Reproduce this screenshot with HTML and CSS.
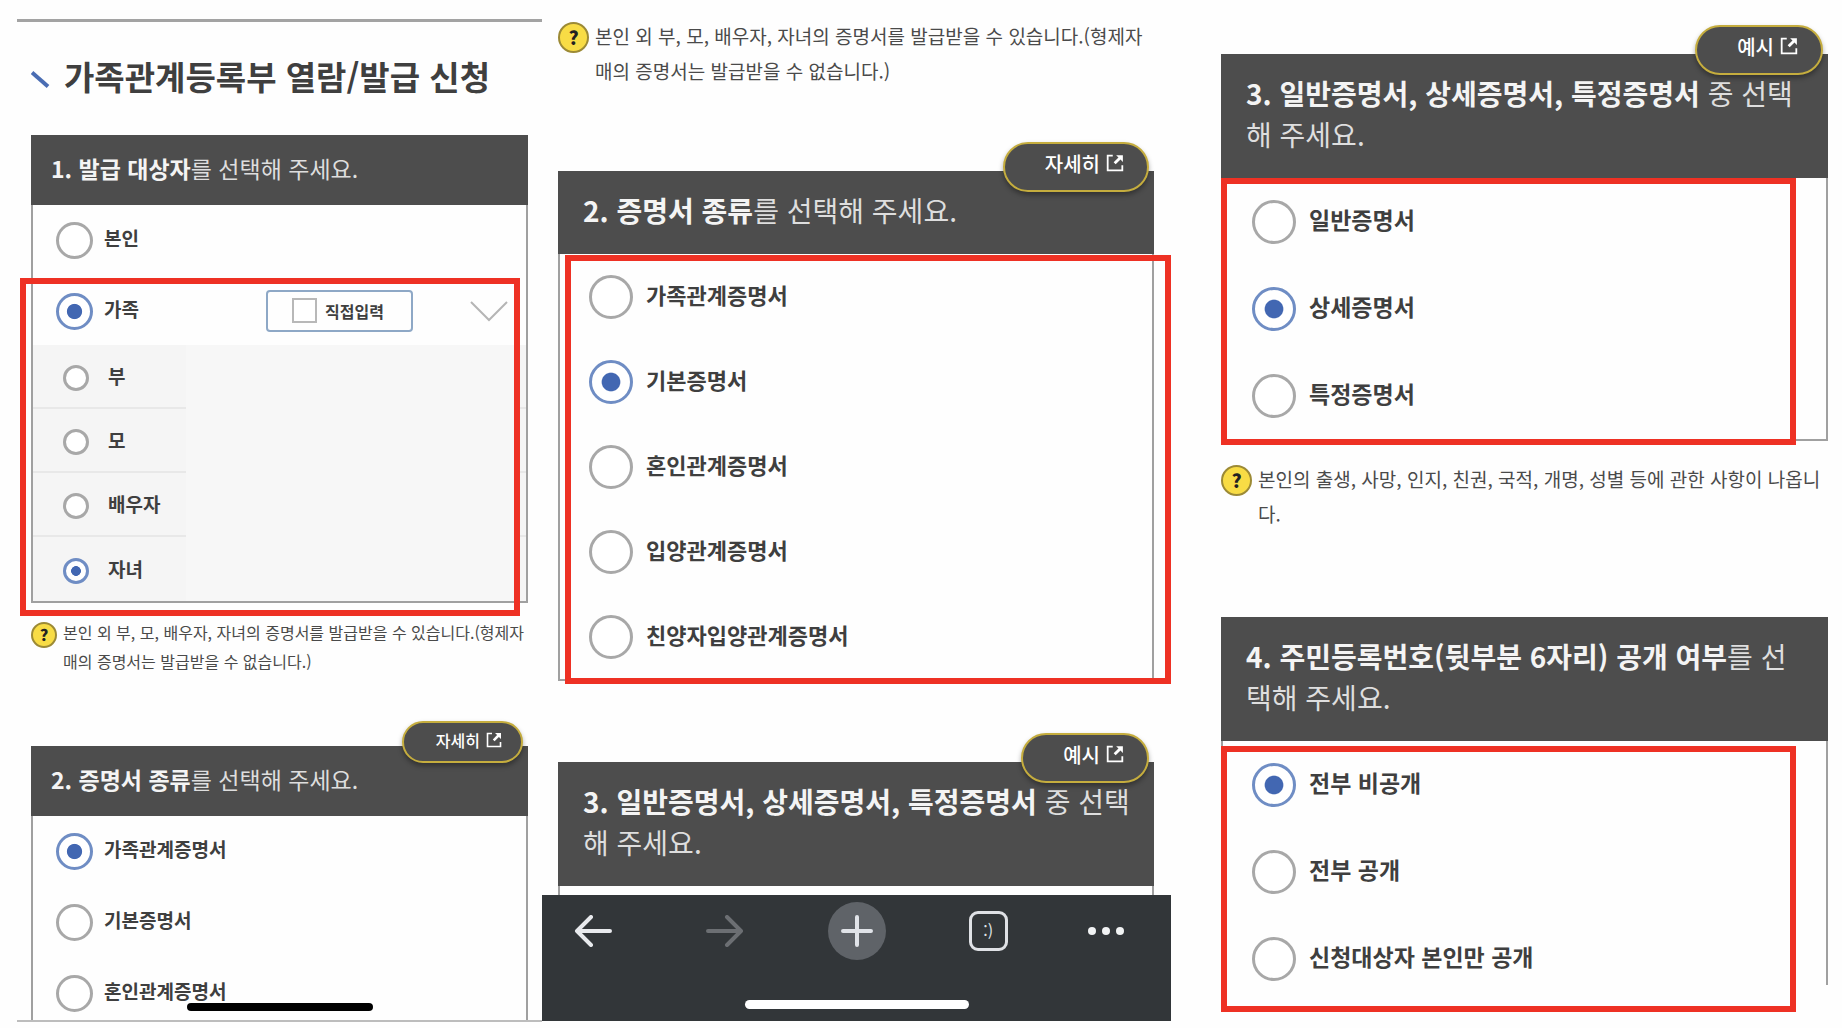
FILE: index.html
```html
<!DOCTYPE html>
<html lang="ko">
<head>
<meta charset="utf-8">
<meta name="viewport" content="width=device-width, initial-scale=1">
<title>가족관계등록부 열람/발급 신청</title>
<link rel="stylesheet" href="styles.css">
</head>
<body>
<svg class="defs" aria-hidden="true">
  <symbol id="external" viewBox="0 0 16 16">
    <path d="M6 1.5H1.5V14.5H14.5V10" fill="none" stroke="currentColor" stroke-width="1.6"/>
    <path d="M9 1H15V7L12.9 4.9L8.6 9.2L6.8 7.4L11.1 3.1Z" fill="currentColor"/>
  </symbol>
</svg>
<main class="board">

  <section class="shot shot-start">
    <h1 class="title">
      <svg class="title-mark" viewBox="0 0 19 17" aria-hidden="true"><path d="M1 1.5L17 15.5" stroke="#4a6db3" stroke-width="4"/></svg>
      가족관계등록부 열람/발급 신청
    </h1>

    <div class="panel">
      <h2 class="panel-head"><b>1. 발급 대상자</b>를 선택해 주세요.</h2>
      <label class="option"><input type="radio" name="target">본인</label>
      <div class="family">
        <div class="family-head">
          <label class="option"><input type="radio" name="target" checked>가족</label>
          <label class="direct"><input type="checkbox">직접입력</label>
          <button class="expand" type="button" aria-label="펼치기">
            <svg viewBox="0 0 38 22" aria-hidden="true"><path d="M1 2L19 20L37 2" fill="none" stroke="#b5b5b5" stroke-width="2"/></svg>
          </button>
        </div>
        <div class="members">
          <label class="member"><input type="radio" name="member">부</label>
          <label class="member"><input type="radio" name="member">모</label>
          <label class="member"><input type="radio" name="member">배우자</label>
          <label class="member"><input type="radio" name="member" checked>자녀</label>
          <div class="mask"></div>
        </div>
        <div class="mark mark-family"></div>
      </div>
    </div>

    <div class="note">
      <span class="help">?</span>
      <p>본인 외 부, 모, 배우자, 자녀의 증명서를 발급받을 수 있습니다.(형제자<br>매의 증명서는 발급받을 수 없습니다.)</p>
    </div>

    <div class="panel panel-cut">
      <button class="pill" type="button">자세히<svg aria-hidden="true"><use href="#external"/></svg></button>
      <h2 class="panel-head"><b>2. 증명서 종류</b>를 선택해 주세요.</h2>
      <label class="option"><input type="radio" name="kind-a" checked>가족관계증명서</label>
      <label class="option"><input type="radio" name="kind-a">기본증명서</label>
      <label class="option"><input type="radio" name="kind-a">혼인관계증명서</label>
      <div class="home-bar"></div>
    </div>
  </section>

  <section class="shot shot-kind large">
    <div class="note">
      <span class="help">?</span>
      <p>본인 외 부, 모, 배우자, 자녀의 증명서를 발급받을 수 있습니다.(형제자<br>매의 증명서는 발급받을 수 없습니다.)</p>
    </div>

    <div class="panel">
      <button class="pill" type="button">자세히<svg aria-hidden="true"><use href="#external"/></svg></button>
      <h2 class="panel-head"><b>2. 증명서 종류</b>를 선택해 주세요.</h2>
      <div class="options">
        <label class="option"><input type="radio" name="kind-b">가족관계증명서</label>
        <label class="option"><input type="radio" name="kind-b" checked>기본증명서</label>
        <label class="option"><input type="radio" name="kind-b">혼인관계증명서</label>
        <label class="option"><input type="radio" name="kind-b">입양관계증명서</label>
        <label class="option"><input type="radio" name="kind-b">친양자입양관계증명서</label>
        <div class="mark mark-kind"></div>
      </div>
    </div>

    <div class="panel panel-peek">
      <button class="pill" type="button">예시<svg aria-hidden="true"><use href="#external"/></svg></button>
      <h2 class="panel-head"><b>3. 일반증명서, 상세증명서, 특정증명서</b> 중 선택<br>해 주세요.</h2>
    </div>

    <nav class="browser-bar">
      <div class="browser-buttons">
        <button type="button" aria-label="뒤로"><svg width="38" height="32" viewBox="0 0 38 32"><path d="M36 16H4M17 2L3 16L17 30" fill="none" stroke="#e8eaed" stroke-width="4" stroke-linecap="round" stroke-linejoin="round"/></svg></button>
        <button type="button" aria-label="앞으로"><svg width="38" height="32" viewBox="0 0 38 32"><path d="M2 16H34M21 2L35 16L21 30" fill="none" stroke="#6c6f73" stroke-width="4" stroke-linecap="round" stroke-linejoin="round"/></svg></button>
        <button class="new-tab" type="button" aria-label="새 탭"><svg width="32" height="32" viewBox="0 0 32 32"><path d="M16 2V30M2 16H30" stroke="#e0e3e8" stroke-width="4" stroke-linecap="round"/></svg></button>
        <button type="button" aria-label="탭 목록"><span class="tab-count">:)</span></button>
        <button class="more" type="button" aria-label="더보기"><svg width="38" height="10" viewBox="0 0 38 10"><g fill="#f1f3f4"><circle cx="5" cy="5" r="4"/><circle cx="19" cy="5" r="4"/><circle cx="33" cy="5" r="4"/></g></svg></button>
      </div>
      <div class="browser-home"></div>
    </nav>
  </section>

  <section class="shot shot-detail large">
    <div class="panel">
      <button class="pill" type="button">예시<svg aria-hidden="true"><use href="#external"/></svg></button>
      <h2 class="panel-head"><b>3. 일반증명서, 상세증명서, 특정증명서</b> 중 선택<br>해 주세요.</h2>
      <div class="options">
        <label class="option"><input type="radio" name="form">일반증명서</label>
        <label class="option"><input type="radio" name="form" checked>상세증명서</label>
        <label class="option"><input type="radio" name="form">특정증명서</label>
        <div class="mark mark-form"></div>
      </div>
    </div>

    <div class="note">
      <span class="help">?</span>
      <p>본인의 출생, 사망, 인지, 친권, 국적, 개명, 성별 등에 관한 사항이 나옵니<br>다.</p>
    </div>

    <div class="panel panel-cut">
      <h2 class="panel-head"><b>4. 주민등록번호(뒷부분 6자리) 공개 여부</b>를 선<br>택해 주세요.</h2>
      <div class="options">
        <label class="option"><input type="radio" name="open" checked>전부 비공개</label>
        <label class="option"><input type="radio" name="open">전부 공개</label>
        <label class="option"><input type="radio" name="open">신청대상자 본인만 공개</label>
        <div class="mark mark-open"></div>
      </div>
    </div>
  </section>

</main>
</body>
</html>
```
FILE: styles.css
```css
* {
  box-sizing: border-box;
}

body {
  margin: 0;
  background: #fefefe;
  color: #3f3f3f;
  font-family: "Noto Sans CJK KR", "Noto Sans", sans-serif;
}

h1,
h2,
p {
  margin: 0;
}

button {
  padding: 0;
  border: 0;
  background: none;
  font: inherit;
}

.defs {
  position: absolute;
  width: 0;
  height: 0;
}

.board {
  display: grid;
  grid-template-columns: 525fr 629fr 657fr;
  align-items: start;
  padding: 0 14px 0 17px;
}

/* Sizes of the first column; .large overrides them for the other two */
.shot {
  --head-size: 23px;
  --head-line: 28px;
  --head-left: 20px;
  --label-size: 19px;
  --note-size: 16px;
  --note-line: 29px;
  --pill-size: 16px;
  --radio: 37px;
  --row-top: 17px;
  --row-bottom: 17px;
  --row-left: 23px;
  --row-gap: 11px;
  --help: 26px;
  --pill-height: 42px;
  --pill-top: -25px;
  min-width: 0;
  white-space: nowrap;
}

.large {
  --head-size: 28px;
  --head-line: 41px;
  --head-left: 25px;
  --label-size: 22px;
  --note-size: 19px;
  --note-line: 35px;
  --pill-size: 20px;
  --radio: 44px;
  --row-top: 21px;
  --row-bottom: 20px;
  --row-left: 29px;
  --row-gap: 13px;
  --help: 31px;
  --pill-height: 50px;
  --pill-top: -29px;
}

.shot-start {
  margin-top: 19px;
  padding: 30px 14px 0;
  border-top: 3px solid #a3a3a3;
  border-bottom: 2px solid #bdbdbd;
}

.shot-kind {
  padding-top: 19px;
}

.shot-kind > .note,
.shot-kind > .panel {
  margin-left: 16px;
  margin-right: 17px;
}

.shot-detail {
  --label-size: 23px;
  --row-top: 22px;
  --row-bottom: 21px;
  padding: 54px 0 0 50px;
}

.title {
  display: flex;
  align-items: center;
  gap: 14px;
  margin-bottom: 35px;
  font-size: 33px;
  line-height: 48px;
  font-weight: 700;
}

.title-mark {
  width: 19px;
  height: 17px;
  margin-top: 6px;
}

/* Question panels */
.panel {
  position: relative;
  border: 2px solid #a0a0a0;
  border-top: 0;
}

.panel-cut,
.panel-peek {
  border-bottom: 0;
}

.panel-head {
  margin: 0 -2px;
  padding: 19px 0 23px var(--head-left);
  background: #4d4d4d;
  color: #dedede;
  font-size: var(--head-size);
  line-height: var(--head-line);
  font-weight: 400;
}

.panel-head b {
  color: #f4f4f4;
  font-weight: 700;
}

.pill {
  position: absolute;
  top: var(--pill-top);
  right: 3px;
  display: flex;
  align-items: center;
  gap: 6px;
  height: var(--pill-height);
  padding: 0 19px 5px 32px;
  border: 2px solid #c5ad3e;
  border-radius: 25px;
  background: #4d4d4d;
  box-shadow: 0 3px 5px rgba(0, 0, 0, 0.35);
  color: #fff;
  font-size: var(--pill-size);
  font-weight: 500;
}

.pill svg {
  width: 16px;
  height: 16px;
}

.large .pill {
  padding: 0 23px 8px 40px;
}

.large .pill svg {
  width: 18px;
  height: 18px;
}

.options {
  position: relative;
}

.option {
  display: flex;
  align-items: flex-start;
  gap: var(--row-gap);
  padding: var(--row-top) 0 var(--row-bottom) var(--row-left);
  font-size: var(--label-size);
  line-height: calc(var(--radio) - 5px);
  font-weight: 700;
}

.panel-cut .option:last-of-type {
  padding-bottom: 8px;
}

.shot-detail .panel-cut .option:last-of-type {
  padding-bottom: 4px;
}

input[type="radio"] {
  appearance: none;
  flex: none;
  width: var(--radio);
  height: var(--radio);
  margin: 0;
  border: 3px solid #a8a8a8;
  border-radius: 50%;
  background: #fff;
}

input[type="radio"]:checked {
  border-color: #6f8dc4;
  background: radial-gradient(circle closest-side, #4267b2 46%, #fff 52%);
}

/* Family group with its nested choices */
.family {
  position: relative;
}

.family-head {
  display: grid;
  grid-template-columns: 1fr auto auto;
  align-items: center;
  padding: 0 18px 0 0;
}

.family-head .option {
  padding-bottom: 15px;
}

.direct {
  display: flex;
  align-items: center;
  gap: 8px;
  height: 42px;
  padding: 0 27px 0 24px;
  border: 2px solid #8ea8c6;
  border-radius: 4px;
  font-size: 16px;
  font-weight: 700;
}

.direct input {
  appearance: none;
  width: 25px;
  height: 25px;
  margin: 0;
  border: 2px solid #b8b8b8;
  background: #fff;
}

.expand {
  display: flex;
  margin-left: 57px;
}

.expand svg {
  width: 38px;
  height: 22px;
}

.members {
  --radio: 26px;
  position: relative;
  background: #f5f5f5;
}

.member {
  display: flex;
  align-items: center;
  gap: 19px;
  height: 64px;
  padding-left: 30px;
  border-bottom: 2px solid #e8e8e8;
  font-size: 19px;
  line-height: 28px;
  font-weight: 700;
}

.member input {
  margin-top: 4px;
}

.member:last-of-type {
  border-bottom: 0;
}

.mask {
  position: absolute;
  inset: 0 6px 0 153px;
  background: #f7f7f7;
}

/* Red highlight frames laid over the panels */
.mark {
  position: absolute;
  border: 6px solid #ee3124;
  pointer-events: none;
}

.mark-family {
  inset: 2px 6px -15px -13px;
}

.mark-kind {
  inset: 1px -19px -5px 5px;
}

.mark-form {
  inset: 0 30px -6px -2px;
}

.mark-open {
  inset: 5px 30px -27px -2px;
}

/* Help notes */
.note {
  display: flex;
  gap: 6px;
  color: #4a4a4a;
  font-size: var(--note-size);
  line-height: var(--note-line);
}

.note p {
  margin: -1px 0 1px;
}

.help {
  flex: none;
  width: var(--help);
  height: var(--help);
  margin-top: 3px;
  border: 2px solid #9c8a35;
  border-radius: 50%;
  background: #f8dc45;
  color: #222;
  font-weight: 900;
  line-height: calc(var(--help) - 5px);
  text-align: center;
}

.shot-start .note {
  margin: 16px 0 69px;
}

.shot-kind .note {
  margin-bottom: 82px;
}

.shot-kind .panel-peek {
  margin-top: 81px;
  padding-bottom: 9px;
}

.shot-detail .note {
  margin: 21px 0 85px;
}

.home-bar {
  position: absolute;
  bottom: 9px;
  left: 50%;
  width: 186px;
  height: 8px;
  margin-left: -93px;
  border-radius: 4px;
  background: #000;
}

/* Mobile browser toolbar */
.browser-bar {
  padding: 7px 0 12px;
  background: #323639;
}

.browser-buttons {
  display: flex;
  justify-content: space-between;
  padding: 0 46px 0 22px;
}

.browser-buttons button {
  display: flex;
  align-items: center;
  justify-content: center;
  width: 58px;
  height: 58px;
}

.browser-buttons .more {
  width: 34px;
  justify-content: flex-end;
}

.more svg {
  flex: none;
}

.new-tab {
  border-radius: 50%;
  background: #5f6368;
}

.tab-count {
  width: 39px;
  height: 40px;
  border: 3px solid #dfe1e5;
  border-radius: 9px;
  color: #dfe1e5;
  font-size: 16px;
  line-height: 32px;
  text-align: center;
}

.browser-home {
  width: 224px;
  height: 9px;
  margin: 40px auto 0;
  border-radius: 5px;
  background: #fff;
}
```
